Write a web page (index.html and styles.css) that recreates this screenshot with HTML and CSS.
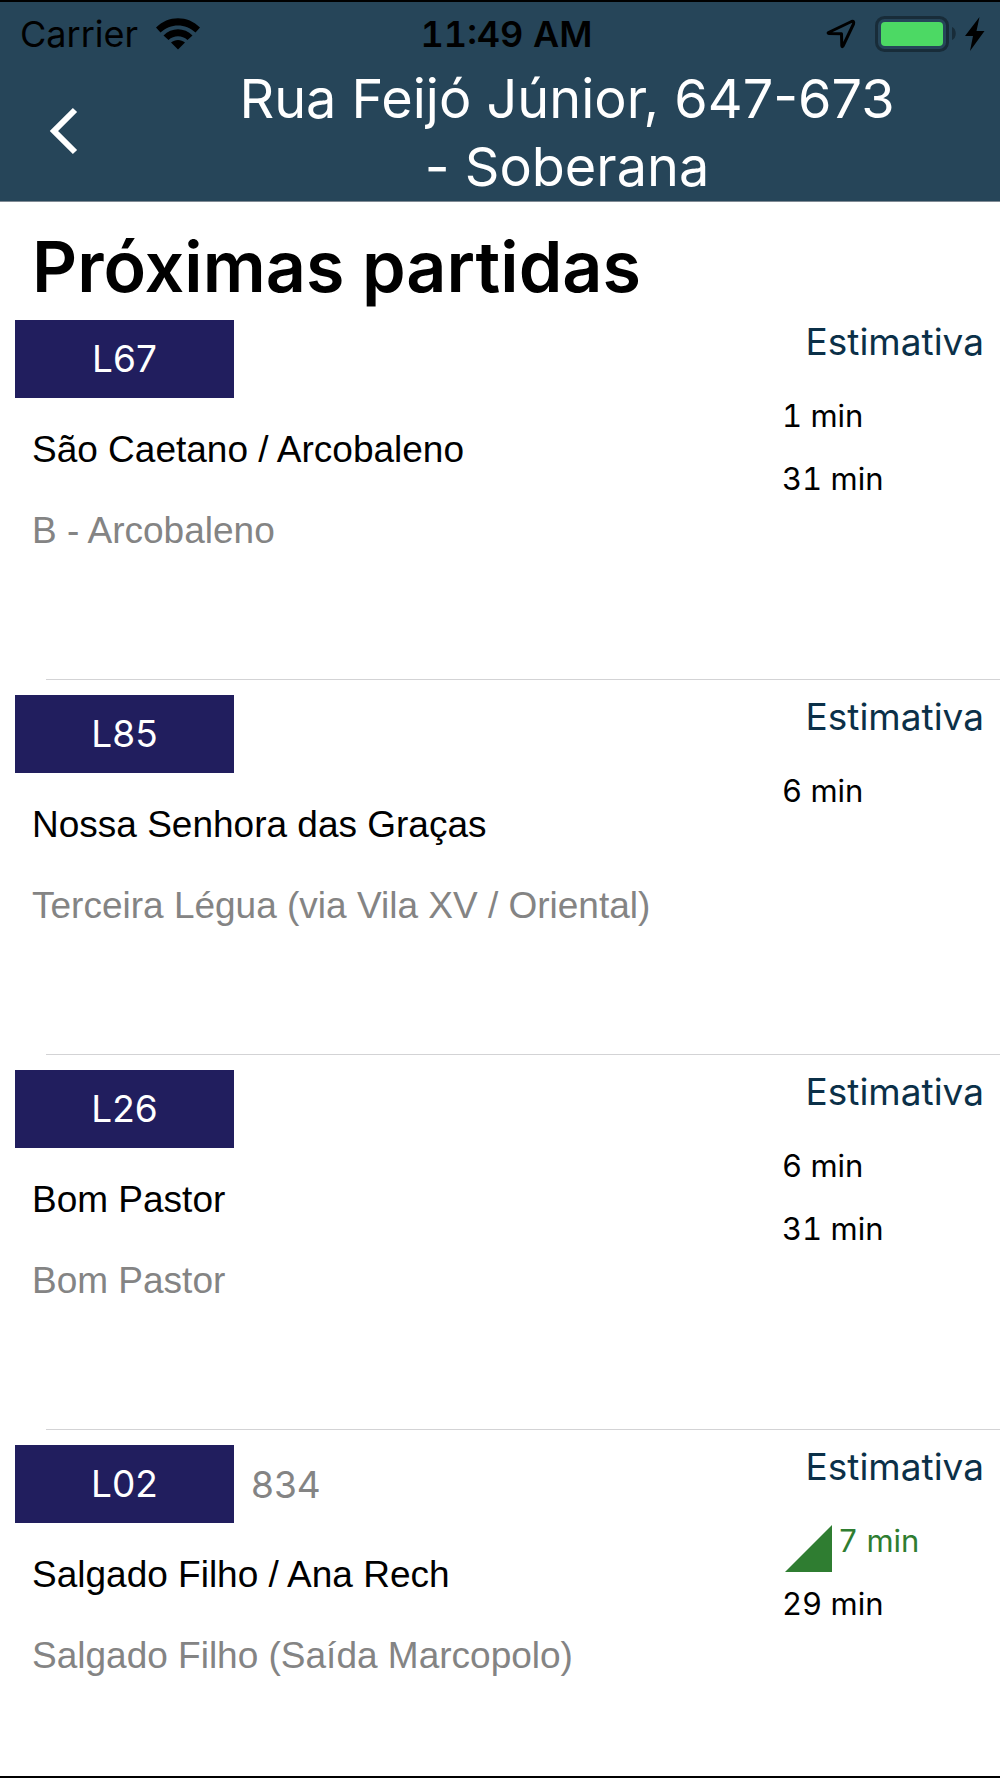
FILE: index.html
```html
<!DOCTYPE html>
<html lang="pt-BR">
  <head>
    <meta charset="utf-8" />
    <meta name="viewport" content="width=device-width, initial-scale=1" />
    <title>Próximas partidas</title>
    <link rel="stylesheet" href="styles.css">
  </head>

  <body>
    <header class="header">
      <div class="status-bar">
        <div class="status-left">
          <span>Carrier</span>
          <svg class="wifi" width="44" height="32" viewBox="0 0 44 32" aria-hidden="true">
            <path d="M0 9.500 C12 -3 32 -3 44 9.500 L39.500 14.500 C29.500 5 14.500 5 4.500 14.500 Z" />
            <path d="M7.500 17.500 C15.500 9 28.500 9 36.500 17.500 L31.500 22 C26 17 18 17 12.500 22 Z" />
            <path d="M15 24.500 C19 21 25 21 29 24.500 L22 31.500 Z" />
          </svg>
        </div>
        <time class="clock">11:49 AM</time>
        <div class="status-right">
          <svg class="location" width="30" height="30" viewBox="0 0 30 30" aria-hidden="true">
            <path d="M2.500 13.500 L25.500 2.500 Q28.500 1.500 27.500 5 L17 27 Q16 28.500 15.800 26.500 L15.500 14.800 L3 14.500 Q1.500 14.200 2.500 13.500 Z" />
          </svg>
          <svg class="battery" width="82" height="36" viewBox="0 0 82 36" aria-hidden="true">
            <rect class="battery-case" x="1.500" y="1.500" width="71" height="33" rx="8" />
            <rect class="battery-level" x="6" y="6" width="62" height="24" rx="4" />
            <path class="battery-cap" d="M77 11 C82 13 82 22 77 24 Z" />
          </svg>
          <svg class="bolt" width="20" height="34" viewBox="0 0 20 34" aria-hidden="true">
            <path d="M14.500 0 L0 19 H8 L5 34 L19.500 14 H11.500 Z" />
          </svg>
        </div>
      </div>
      <div class="nav-bar">
        <button class="back" type="button" aria-label="Voltar">
          <svg width="30" height="48" viewBox="0 0 30 48" aria-hidden="true">
            <path d="M26 3 L5 24 L26 45" />
          </svg>
        </button>
        <h1 class="stop-name">Rua Feijó Júnior, 647-673 - Soberana</h1>
      </div>
    </header>

    <main class="departures">
      <h2>Próximas partidas</h2>

      <ul class="lines">
        <li class="line">
          <div class="route">
            <div class="codes">
              <span class="badge">L67</span>
            </div>
            <p class="name">São Caetano / Arcobaleno</p>
            <p class="direction">B - Arcobaleno</p>
          </div>
          <div class="estimate">
            <h3>Estimativa</h3>
            <p>1 min</p>
            <p>31 min</p>
          </div>
        </li>

        <li class="line">
          <div class="route">
            <div class="codes">
              <span class="badge">L85</span>
            </div>
            <p class="name">Nossa Senhora das Graças</p>
            <p class="direction">Terceira Légua (via Vila XV / Oriental)</p>
          </div>
          <div class="estimate">
            <h3>Estimativa</h3>
            <p>6 min</p>
          </div>
        </li>

        <li class="line">
          <div class="route">
            <div class="codes">
              <span class="badge">L26</span>
            </div>
            <p class="name">Bom Pastor</p>
            <p class="direction">Bom Pastor</p>
          </div>
          <div class="estimate">
            <h3>Estimativa</h3>
            <p>6 min</p>
            <p>31 min</p>
          </div>
        </li>

        <li class="line">
          <div class="route">
            <div class="codes">
              <span class="badge">L02</span>
              <span class="vehicle">834</span>
            </div>
            <p class="name">Salgado Filho / Ana Rech</p>
            <p class="direction">Salgado Filho (Saída Marcopolo)</p>
          </div>
          <div class="estimate">
            <h3>Estimativa</h3>
            <p class="live">
              <svg width="47" height="47" viewBox="0 0 47 47" aria-hidden="true">
                <path d="M47 0 V47 H0 Z" />
              </svg>
              7 min
            </p>
            <p>29 min</p>
          </div>
        </li>
      </ul>
    </main>
  </body>
</html>
```

FILE: styles.css
```css
* {
  box-sizing: border-box;
}

body {
  display: flex;
  flex-direction: column;
  min-height: 100vh;
  margin: 0;
  border-top: 2px solid #000;
  border-bottom: 2px solid #000;
  background: #fff;
  color: #000;
  font-family: Inter, sans-serif;
}

h1,
h2,
h3,
p,
ul {
  margin: 0;
  padding: 0;
  font-weight: normal;
}

ul {
  list-style: none;
}

.header {
  background: #264559;
  border-bottom: 1px solid #7f8a94;
}

/* Status bar */
.status-bar {
  display: grid;
  grid-template-columns: 1fr auto 1fr;
  align-items: center;
  height: 63px;
  padding: 0 15px 0 20px;
  font-size: 36px;
}

.status-left,
.status-right {
  display: flex;
  align-items: center;
}

.status-left {
  gap: 18px;
}

.status-right {
  justify-content: flex-end;
}

.clock {
  padding-left: 8px;
  font-weight: 600;
  font-variant-numeric: tabular-nums;
}

.location {
  margin-right: 19px;
  fill: none;
  stroke: #000;
  stroke-width: 3;
  stroke-linejoin: round;
}

.battery {
  margin-right: 8px;
}

.battery-case {
  fill: none;
  stroke: #182c39;
  stroke-width: 3;
}

.battery-level {
  fill: #4cd964;
}

.battery-cap {
  fill: #182c39;
}

/* Navigation bar */
.nav-bar {
  display: flex;
  align-items: center;
}

.back {
  flex: none;
  width: 134px;
  padding: 0 0 4px 49px;
  border: 0;
  background: none;
  text-align: left;
  cursor: pointer;
}

.back svg {
  display: block;
  fill: none;
  stroke: #fff;
  stroke-width: 6;
}

.stop-name {
  flex: 1;
  padding: 0 98px;
  color: #fff;
  font-size: 54px;
  line-height: 68px;
  text-align: center;
}

/* Departures */
.departures h2 {
  padding: 27px 32px 0;
  font-size: 70px;
  font-weight: 600;
  line-height: 76px;
}

.line {
  display: flex;
  justify-content: space-between;
  min-height: 375px;
  padding: 15px 16px 0 15px;
  background: linear-gradient(#d3d3d5, #d3d3d5) 46px 100% / 100% 1px no-repeat;
}

.line:last-child {
  background: none;
  min-height: 0;
}

.route {
  font-family: "Liberation Sans", sans-serif;
  font-size: 37px;
}

.codes {
  display: flex;
  align-items: center;
  gap: 17px;
  margin-bottom: 11px;
  font-family: Inter, sans-serif;
  font-size: 37px;
}

.badge {
  width: 219px;
  background: #211e5e;
  color: #fff;
  line-height: 78px;
  text-align: center;
}

.vehicle {
  color: #848484;
}

.name,
.direction {
  padding-left: 17px;
  line-height: 81px;
}

.direction {
  color: #848484;
}

.estimate {
  width: 202px;
  font-size: 31px;
  font-variant-numeric: tabular-nums;
  line-height: 63px;
}

.estimate h3 {
  margin-bottom: 20px;
  color: #0b3048;
  font-size: 37px;
  line-height: 44px;
  text-align: right;
}

.live {
  display: flex;
  gap: 6px;
  padding-left: 3px;
  color: #2f7d31;
}

.live svg {
  margin-top: 16px;
  fill: currentColor;
}
```
